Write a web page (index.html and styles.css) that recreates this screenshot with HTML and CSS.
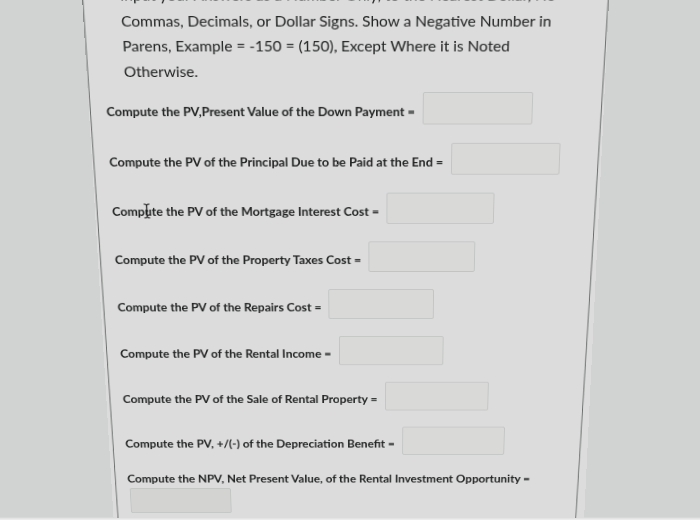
FILE: index.html
```html
<!DOCTYPE html>
<html lang="en">
<head>
<meta charset="utf-8">
<title>Rental Investment PV</title>
<link rel="stylesheet" href="styles.css">
</head>
<body>
<div class="stage">
  <div class="panel">
    <div class="intro">
      Input your Answers as a Number Only, to the Nearest Dollar, No<br>
      Commas, Decimals, or Dollar Signs. Show a Negative Number in<br>
      Parens, Example = -150 = (150), Except Where it is Noted<br>
      Otherwise.
    </div>
    <div class="rows">
      <div class="row"><span class="label">Compute the PV,Present Value of the Down Payment =</span><span class="box"></span></div>
      <div class="row"><span class="label">Compute the PV of the Principal Due to be Paid at the End =</span><span class="box"></span></div>
      <div class="row"><span class="label has-cursor">Compute the PV of the Mortgage Interest Cost =<svg class="cursor" width="7" height="17" viewBox="0 0 7 17"><path d="M0.5 0.8 Q3.5 0.8 3.5 2.8 Q3.5 0.8 6.5 0.8 M3.5 2.8 V14.2 M0.5 16.2 Q3.5 16.2 3.5 14.2 Q3.5 16.2 6.5 16.2 M2 8.5 H5" fill="none" stroke="#1d1d1d" stroke-width="1.3"/></svg></span><span class="box"></span></div>
      <div class="row"><span class="label">Compute the PV of the Property Taxes Cost =</span><span class="box"></span></div>
      <div class="row"><span class="label">Compute the PV of the Repairs Cost =</span><span class="box"></span></div>
      <div class="row"><span class="label">Compute the PV of the Rental Income =</span><span class="box"></span></div>
      <div class="row"><span class="label">Compute the PV of the Sale of Rental Property =</span><span class="box"></span></div>
      <div class="row"><span class="label">Compute the PV, +/(-) of the Depreciation Benefit =</span><span class="box"></span></div>
      <div class="row stacked"><span class="label">Compute the NPV, Net Present Value, of the Rental Investment Opportunity =</span><span class="box box-npv"></span></div>
    </div>
  </div>
</div>
</body>
</html>
```

FILE: styles.css
```css
html, body {
  margin: 0;
  padding: 0;
  overflow: hidden;
  height: 520px;
}
html {
  background: linear-gradient(to bottom, #d1d3d2 0, #d1d3d2 517px, #e9eae9 519px, #eeeeee 520px);
}
body {
  font-family: Lato, "Open Sans", "Liberation Sans", sans-serif;
  color: #222323;
}
.stage {
  width: 700px;
  height: 520px;
  overflow: hidden;
}
.panel {
  position: relative;
  box-sizing: border-box;
  width: 529px;
  height: 618px;
  margin-left: 81px;
  margin-top: -20px;
  background: #dbdcdb;
  transform-origin: 50% 0;
  transform: perspective(1000px) rotateX(-11.6deg) skewX(0.35deg);
}
.panel::before,
.panel::after {
  content: "";
  position: absolute;
  top: 0;
  bottom: 0;
  width: 1px;
  background: #6a6d6c;
  transform-origin: 50% 0;
}
.panel::before {
  left: 0;
  transform: rotate(-0.42deg);
}
.panel::after {
  right: 0;
  transform: rotate(0.83deg);
}
.intro {
  padding: 2px 0 0 38px;
  font-size: 15.6px;
  line-height: 26.5px;
  font-weight: 400;
}
.rows {
  margin-top: 9px;
  padding-left: 18px;
  display: flex;
  flex-direction: column;
  gap: 20px;
}
.row {
  display: flex;
  align-items: center;
  height: 35px;
}
.label {
  font-size: 13px;
  font-weight: 700;
  padding-top: 7px;
  white-space: nowrap;
}
.has-cursor {
  position: relative;
}
.cursor {
  position: absolute;
  left: 33px;
  top: 6px;
}
.box {
  box-sizing: border-box;
  width: 113px;
  height: 35px;
  margin-left: 8px;
  border: 1px solid #c3c5c4;
  border-radius: 2px;
  background: #d9dad8;
}
.row.stacked {
  flex-direction: column;
  align-items: flex-start;
  height: auto;
  margin-top: 1px;
}
.row.stacked .label {
  padding-top: 0;
  line-height: 18px;
}
.box-npv {
  margin: 3px 0 0 2px;
  height: 32px;
  background: #d3d4d2;
}
```
